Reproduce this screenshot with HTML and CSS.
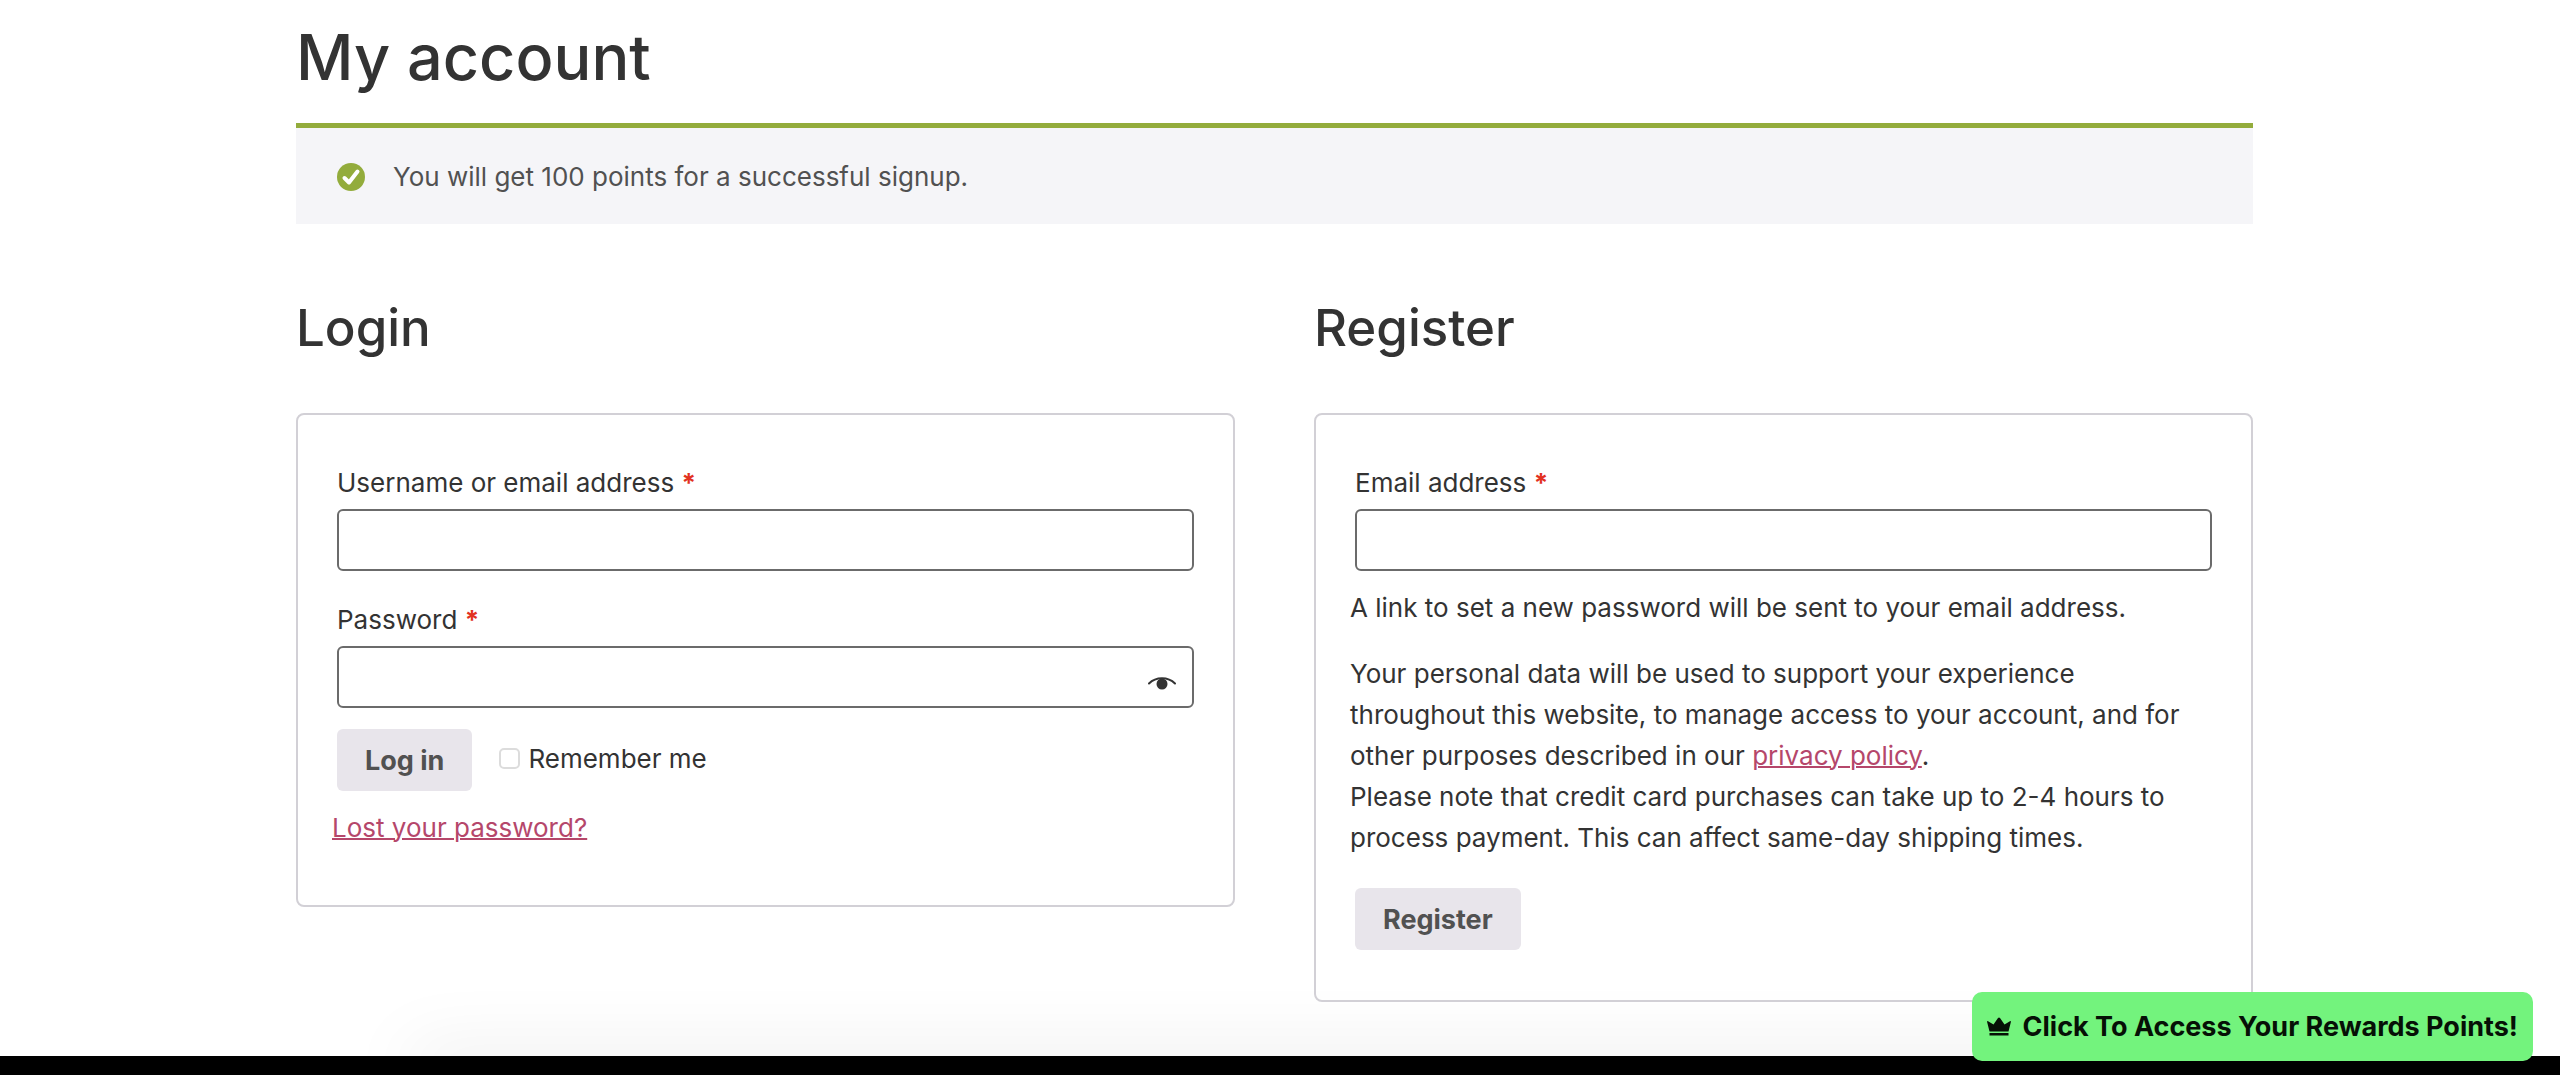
FILE: index.html
```html
<!DOCTYPE html>
<html lang="en">
<head>
<meta charset="utf-8">
<title>My account</title>
<meta name="viewport" content="width=device-width, initial-scale=1">
<link rel="stylesheet" href="styles.css">
</head>
<body>
<main class="page">
  <h1 class="page-title">My account</h1>
  <div class="notice" role="status">
    <svg class="notice-icon" viewBox="0 0 28 28" aria-hidden="true"><circle cx="14" cy="14" r="14" fill="#93ac3c"/><path d="M7.500 15 L12 19.500 L20.500 8.500" fill="none" stroke="#fff" stroke-width="4" stroke-linecap="round" stroke-linejoin="round"/></svg>
    <span>You will get 100 points for a successful signup.</span>
  </div>
  <div class="columns">
    <section class="column">
      <h2 class="section-title">Login</h2>
      <form class="card">
        <div class="field">
          <label for="username">Username or email address <span class="required">*</span></label>
          <input class="text-input" id="username" type="text">
        </div>
        <div class="field">
          <label for="password">Password <span class="required">*</span></label>
          <div class="password-wrap">
            <input class="text-input" id="password" type="password">
            <button class="show-password" type="button" aria-label="Show password">
              <svg class="eye" viewBox="0 0 28 14" aria-hidden="true"><path d="M1 6.500 C8 -0.500 20 -0.500 27 6.500" fill="none" stroke="#333" stroke-width="2" stroke-linecap="round"/><circle cx="14" cy="7" r="5.500" fill="#333"/></svg>
            </button>
          </div>
        </div>
        <div class="actions">
          <button class="button" type="submit">Log in</button>
          <label class="remember" for="remember"><input class="checkbox" id="remember" type="checkbox"><span>Remember me</span></label>
        </div>
        <p class="text lost"><a class="link" href="#">Lost your password?</a></p>
      </form>
    </section>
    <section class="column">
      <h2 class="section-title">Register</h2>
      <form class="card">
        <div class="field">
          <label for="email">Email address <span class="required">*</span></label>
          <input class="text-input" id="email" type="email">
        </div>
        <p class="text">A link to set a new password will be sent to your email address.</p>
        <p class="text">Your personal data will be used to support your experience throughout this website, to manage access to your account, and for other purposes described in our <a class="link" href="#">privacy policy</a>.<br>Please note that credit card purchases can take up to 2-4 hours to process payment. This can affect same-day shipping times.</p>
        <div class="actions">
          <button class="button" type="submit">Register</button>
        </div>
      </form>
    </section>
  </div>
</main>
<footer class="footer"></footer>
<button class="rewards" type="button">
  <svg class="crown" viewBox="0 0 24 20" aria-hidden="true"><path d="M0 4.500 Q0.500 3.500 1.500 4.500 L6.500 7.500 L11 1 Q12 0 13 1 L17.500 7.500 L22.500 4.500 Q23.500 3.500 24 4.500 L21.500 14.500 H2.500 Z M2.500 16 H21.500 V18.500 H2.500 Z" fill="#061006"/></svg>
  <span>Click To Access Your Rewards Points!</span>
</button>
</body>
</html>
```
FILE: styles.css
```css
* { box-sizing: border-box; }
body {
  margin: 0;
  min-height: 100vh;
  display: flex;
  flex-direction: column;
  background: #fff;
  color: #333;
  font-family: Inter, "Liberation Sans", sans-serif;
  font-size: 26px;
  line-height: 41px;
}
h1, h2, p { margin: 0; font-weight: 500; }
.page { padding: 19px 307px 54px 296px; }
.page-title { font-size: 63px; line-height: 76px; }
.notice {
  display: flex;
  align-items: center;
  gap: 28px;
  margin-top: 28px;
  padding: 28px 41px 27px;
  border-top: 5px solid #93ac3c;
  background: #f5f5f8;
  color: #515151;
}
.notice-icon { width: 28px; height: 28px; }
.columns {
  display: grid;
  grid-template-columns: 1fr 1fr;
  align-items: start;
  gap: 79px;
  margin-top: 74px;
}
.section-title { font-size: 51px; line-height: 60px; margin-bottom: 55px; }
.card {
  padding: 47px 39px 50px;
  border: 2px solid #d2d0d6;
  border-radius: 8px;
}
.field { display: flex; flex-direction: column; gap: 6px; margin-bottom: 16px; }
.field + .field { margin-top: 28px; }
.required { color: #e2321f; font-weight: 700; }
.text-input {
  width: 100%;
  height: 62px;
  padding: 12px;
  border: 2px solid #6b6b6b;
  border-radius: 6px;
  background: #fff;
  font: inherit;
}
.password-wrap { position: relative; }
.show-password {
  position: absolute;
  right: 18px;
  top: 31px;
  padding: 0;
  border: 0;
  background: none;
  line-height: 0;
}
.eye { width: 28px; height: 14px; }
.actions { display: flex; align-items: center; gap: 27px; margin-top: 21px; }
.text + .actions { margin-top: 30px; }
.button {
  height: 62px;
  padding: 0 28px;
  border: 0;
  border-radius: 6px;
  background: #e8e5eb;
  color: #515151;
  font: inherit;
  font-size: 27px;
  font-weight: 700;
}
.remember { display: flex; align-items: center; gap: 8px; padding-bottom: 4px; }
.checkbox {
  appearance: none;
  width: 21px;
  height: 21px;
  margin: 0;
  border: 2px solid #dcdcdc;
  border-radius: 5px;
  background: #fff;
}
.text { margin: 0 0 25px -5px; font-weight: 400; }
.lost { margin-top: 16px; margin-bottom: 7px; }
.link { color: #b5476b; text-decoration-thickness: 2px; }
.footer { position: relative; flex: 1 0 17px; background: #000; }
/* soft shade rising above the footer, narrower than the footer itself */
.footer::before {
  content: "";
  position: absolute;
  inset: 0 16%;
  z-index: -1;
  box-shadow: 0 0 70px rgba(0, 0, 0, 0.15);
}
.rewards {
  position: fixed;
  right: 27px;
  bottom: 14px;
  display: flex;
  align-items: center;
  gap: 12px;
  height: 69px;
  padding: 0 15px;
  border: 0;
  border-radius: 10px;
  background: #73f37d;
  color: #061006;
  font: inherit;
  font-size: 27px;
  font-weight: 700;
}
.crown { width: 24px; height: 20px; }
```
